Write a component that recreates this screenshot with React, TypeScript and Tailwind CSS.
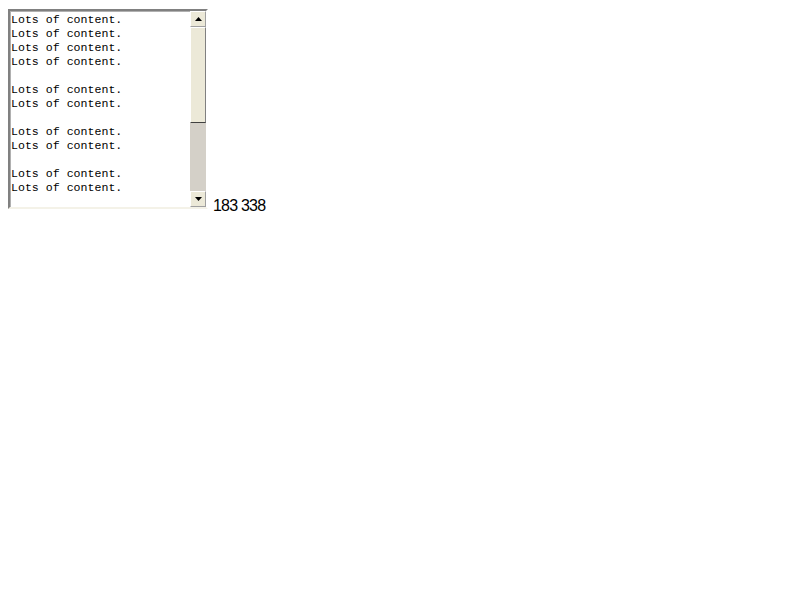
const lines = [
  "Lots of content.",
  "Lots of content.",
  "Lots of content.",
  "Lots of content.",
  "",
  "Lots of content.",
  "Lots of content.",
  "",
  "Lots of content.",
  "Lots of content.",
  "",
  "Lots of content.",
  "Lots of content.",
];

function Arrow({ up }: { up?: boolean }) {
  return (
    <svg width="7" height="4" viewBox="0 0 7 4" className="block">
      {up ? <polygon points="3.5,0 7,4 0,4" fill="#000" /> : <polygon points="0,0 7,0 3.5,4" fill="#000" />}
    </svg>
  );
}

function ScrollButton({ up }: { up?: boolean }) {
  return (
    <div className="flex h-4 w-4 shrink-0 items-center justify-center border border-t-[#fff] border-l-[#fff] border-r-[#a0a0a0] border-b-[#a0a0a0] bg-[#ece9d8]">
      <Arrow up={up} />
    </div>
  );
}

export default function App() {
  return (
    <div className="min-h-[600px] bg-white">
      <div className="flex items-end pb-6 pl-2 pt-[9px]">
        <div className="flex h-[200px] w-[200px] shrink-0 border-2 border-t-[#808080] border-l-[#808080] border-r-[#fff] border-b-[#f4f2e8] bg-white shadow-[inset_1px_1px_0_#b0b0b0]">
          <div className="h-full flex-1 overflow-hidden px-px pt-[2px] font-['Liberation_Mono',monospace] text-[11.6px] leading-[14px] text-black">
            {lines.map((l, i) => (
              <div key={i} className="h-[14px] whitespace-pre">{l}</div>
            ))}
          </div>
          <div className="flex h-full w-4 flex-col bg-[#d4d0c8]">
            <ScrollButton up />
            <div className="h-[96px] shrink-0 border border-t-[#fff] border-l-[#fff] border-r-[#808080] border-b-[#404040] bg-[#ece9d8]" />
            <div className="flex-1" />
            <ScrollButton />
          </div>
        </div>
        <span className="ml-[5px] mb-[-5px] font-['Liberation_Sans',sans-serif] text-[16px] leading-[16px] tracking-[-0.8px] text-black">
          183 338
        </span>
      </div>
    </div>
  );
}
